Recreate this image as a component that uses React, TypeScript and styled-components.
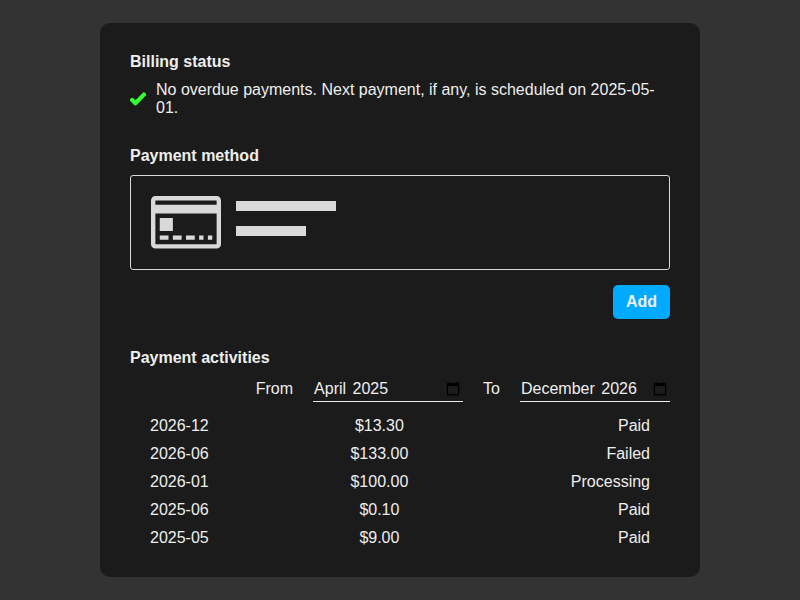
import React from "react";
import styled, { createGlobalStyle } from "styled-components";

const GlobalStyle = createGlobalStyle`
  * { box-sizing: border-box; }
  body {
    margin: 0;
    background: #333333;
    color: #eeeeee;
    font-family: "Liberation Sans", Arial, sans-serif;
    font-size: 16px;
    line-height: 18px;
  }
`;

const Page = styled.main`
  min-height: 100vh;
  display: flex;
  align-items: center;
  justify-content: center;
`;

const Card = styled.div`
  width: 600px;
  padding: 30px;
  display: flex;
  flex-direction: column;
  gap: 30px;
  border-radius: 10px;
  background: #1b1b1b;
`;

const Section = styled.section`
  display: flex;
  flex-direction: column;
`;

const Heading = styled.h2`
  margin: 0 0 10px;
  font-size: 16px;
  font-weight: bold;
`;

const Status = styled.div`
  display: flex;
  align-items: center;
  gap: 10px;
`;

const CheckIcon = styled.svg`
  flex: none;
  width: 16px;
  height: 16px;
  fill: none;
  stroke: #33ff33;
  stroke-width: 4.2;
  stroke-linecap: round;
  stroke-linejoin: round;
`;

const Method = styled.div`
  height: 95px;
  padding: 20px;
  display: flex;
  align-items: flex-start;
  gap: 15px;
  border: 1px solid #d9d9d9;
  border-radius: 3px;
`;

const CardIcon = styled.svg`
  flex: none;
  width: 70px;
  height: 52.5px;
  fill: #d9d9d9;
`;

const Lines = styled.div`
  padding-top: 5px;
  display: flex;
  flex-direction: column;
  gap: 15px;
`;

const Line = styled.div<{ $width: number }>`
  width: ${({ $width }) => $width}px;
  height: 10px;
  background: #d9d9d9;
`;

const AddButton = styled.button`
  align-self: flex-end;
  margin-top: 15px;
  padding: 8px 13px;
  border: 0;
  border-radius: 5px;
  background: #00aaff;
  color: #eeeeee;
  font: bold 16px/18px "Liberation Sans", Arial, sans-serif;
`;

const Filters = styled.div`
  margin-bottom: 15px;
  display: flex;
  align-items: center;
  justify-content: flex-end;
  gap: 20px;
`;

const Filter = styled.div`
  display: flex;
  align-items: baseline;
  gap: 20px;
`;

const MonthField = styled.button`
  width: 150px;
  height: 25px;
  padding: 0 0 0 1px;
  display: flex;
  align-items: center;
  justify-content: space-between;
  border: 0;
  border-bottom: 1px solid #eeeeee;
  background: transparent;
  color: inherit;
  font: inherit;
  word-spacing: 2px;
`;

const CalendarIcon = styled.svg`
  width: 20px;
  height: 15px;
  margin-bottom: 1px;
  fill: #000000;
`;

const Activities = styled.div`
  padding: 0 20px;
  display: flex;
  flex-direction: column;
  gap: 10px;
`;

const Activity = styled.div`
  display: grid;
  grid-template-columns: 151px 156.8px 1fr;
`;

const Cell = styled.span<{ $align?: "center" | "right" }>`
  text-align: ${({ $align }) => $align ?? "left"};
`;

const activities = [
  { month: "2026-12", amount: "$13.30", status: "Paid" },
  { month: "2026-06", amount: "$133.00", status: "Failed" },
  { month: "2026-01", amount: "$100.00", status: "Processing" },
  { month: "2025-06", amount: "$0.10", status: "Paid" },
  { month: "2025-05", amount: "$9.00", status: "Paid" },
];

function MonthPicker({ label, value }: { label: string; value: string }) {
  return (
    <Filter>
      <span>{label}</span>
      <MonthField type="button">
        <span>{value}</span>
        <CalendarIcon viewBox="0 0 24 24" aria-hidden="true">
          <path d="M20 3h-1V1h-2v2H7V1H5v2H4c-1.1 0-2 .9-2 2v16c0 1.1.9 2 2 2h16c1.1 0 2-.9 2-2V5c0-1.1-.9-2-2-2zm0 18H4V8h16v13z" />
        </CalendarIcon>
      </MonthField>
    </Filter>
  );
}

export default function App() {
  return (
    <>
      <GlobalStyle />
      <Page>
        <Card>
          <Section>
            <Heading>Billing status</Heading>
            <Status>
              <CheckIcon viewBox="0 0 16 16" aria-hidden="true">
                <path d="M2.1 8.9 5.4 12.3 13.9 3.6" />
              </CheckIcon>
              <span>No overdue payments. Next payment, if any, is scheduled on 2025-05-01.</span>
            </Status>
          </Section>
          <Section>
            <Heading>Payment method</Heading>
            <Method>
              <CardIcon viewBox="0 0 16 12" aria-hidden="true">
                <path
                  fillRule="evenodd"
                  d="M1 0h14a1 1 0 0 1 1 1v10a1 1 0 0 1-1 1H1a1 1 0 0 1-1-1V1a1 1 0 0 1 1-1zM1 1v1h14V1zM1 4v7h14V4z"
                />
                <path d="M2 5h3v3H2zM2 9h2v1H2zM5 9h2v1H5zM8 9h2v1H8zM11 9h1v1h-1zM13 9h1v1h-1z" />
              </CardIcon>
              <Lines>
                <Line $width={100} />
                <Line $width={70} />
              </Lines>
            </Method>
            <AddButton type="button">Add</AddButton>
          </Section>
          <Section>
            <Heading>Payment activities</Heading>
            <Filters>
              <MonthPicker label="From" value="April 2025" />
              <MonthPicker label="To" value="December 2026" />
            </Filters>
            <Activities>
              {activities.map(({ month, amount, status }) => (
                <Activity key={month}>
                  <Cell>{month}</Cell>
                  <Cell $align="center">{amount}</Cell>
                  <Cell $align="right">{status}</Cell>
                </Activity>
              ))}
            </Activities>
          </Section>
        </Card>
      </Page>
    </>
  );
}
